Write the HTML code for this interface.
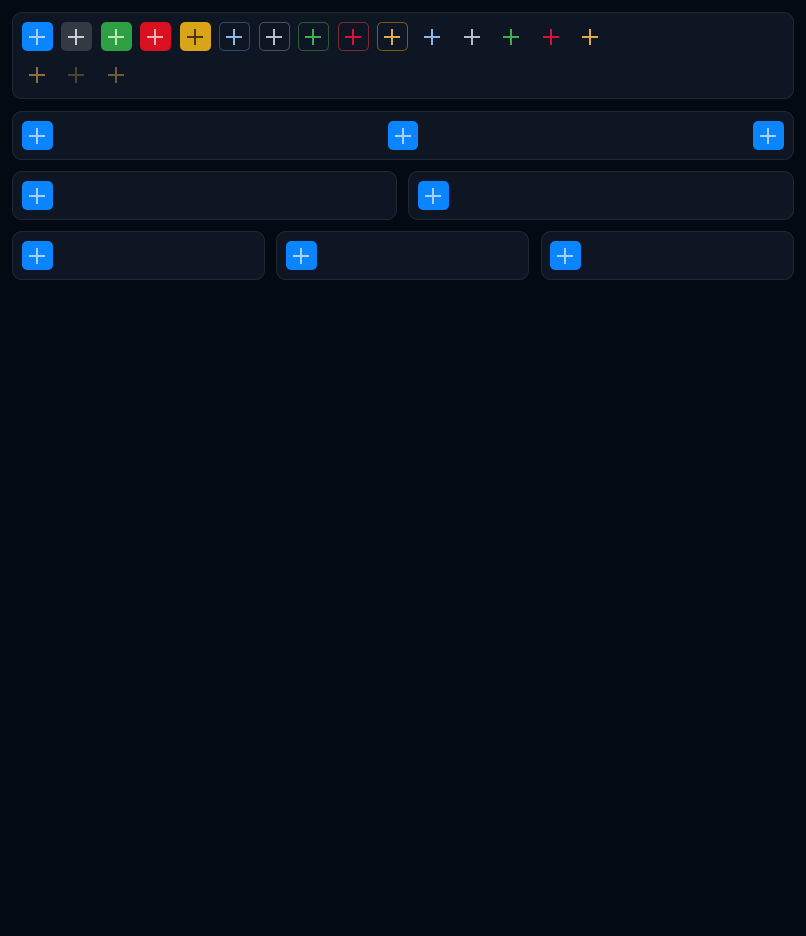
<!DOCTYPE html>
<html><head><meta charset="utf-8"><style>
html,body{margin:0;padding:0;background:#040a14;width:806px;height:936px;overflow:hidden;font-family:"Liberation Sans",sans-serif}
.p{position:absolute;background:#0d1622;border:1px solid #1f2733;border-radius:10px;box-sizing:border-box}
.b{position:absolute;width:31px;height:29px;border-radius:5px;box-sizing:border-box}
.b::before,.b::after{content:"";position:absolute;background:var(--c)}
.b::before{left:7px;top:14px;width:16px;height:2px}
.b::after{left:14px;top:7px;width:2px;height:16px}
.b.bd::before{left:6px;top:13px}
.b.bd::after{left:13px;top:6px}
.blue{background:#0a84ff;--c:#a9d0ff}
</style></head><body>
<div class="p" style="left:12px;top:12px;width:782px;height:87px"></div>
<div class="p" style="left:12px;top:111px;width:782px;height:49px"></div>
<div class="p" style="left:12px;top:171px;width:385px;height:49px"></div>
<div class="p" style="left:408px;top:171px;width:386px;height:49px"></div>
<div class="p" style="left:12px;top:231px;width:253px;height:49px"></div>
<div class="p" style="left:276px;top:231px;width:253px;height:49px"></div>
<div class="p" style="left:541px;top:231px;width:253px;height:49px"></div>

<div class="b blue" style="left:22px;top:22px"></div>
<div class="b" style="left:61px;top:22px;background:#343a44;--c:#c8cdd6"></div>
<div class="b" style="left:101px;top:22px;background:#2ea043;--c:#b5eab8"></div>
<div class="b" style="left:140px;top:22px;background:#d9101f;--c:#f7b4b8"></div>
<div class="b" style="left:180px;top:22px;background:#d9a418;--c:#4a3606"></div>
<div class="b bd" style="left:219px;top:22px;border:1px solid #2e4a6e;--c:#8cb8ea"></div>
<div class="b bd" style="left:259px;top:22px;border:1px solid #4a5058;--c:#b8bec6"></div>
<div class="b bd" style="left:298px;top:22px;border:1px solid #2f5a35;--c:#3fb04f"></div>
<div class="b bd" style="left:338px;top:22px;border:1px solid #7a2a30;--c:#e0103a"></div>
<div class="b bd" style="left:377px;top:22px;border:1px solid #7a5a10;--c:#e0ac4a"></div>
<div class="b" style="left:417px;top:22px;--c:#8cb8ea"></div>
<div class="b" style="left:457px;top:22px;--c:#b8bec6"></div>
<div class="b" style="left:496px;top:22px;--c:#3fb04f"></div>
<div class="b" style="left:536px;top:22px;--c:#e0103a"></div>
<div class="b" style="left:575px;top:22px;--c:#e0ac4a"></div>
<div class="b" style="left:22px;top:60px;--c:#8a7040"></div>
<div class="b" style="left:61px;top:60px;--c:#4a4432"></div>
<div class="b" style="left:101px;top:60px;--c:#6e5a38"></div>

<div class="b blue" style="left:22px;top:121px"></div>
<div class="b blue" style="left:388px;top:121px;width:30px"></div>
<div class="b blue" style="left:753px;top:121px"></div>
<div class="b blue" style="left:22px;top:181px"></div>
<div class="b blue" style="left:418px;top:181px"></div>
<div class="b blue" style="left:22px;top:241px"></div>
<div class="b blue" style="left:286px;top:241px"></div>
<div class="b blue" style="left:550px;top:241px"></div>
</body></html>
